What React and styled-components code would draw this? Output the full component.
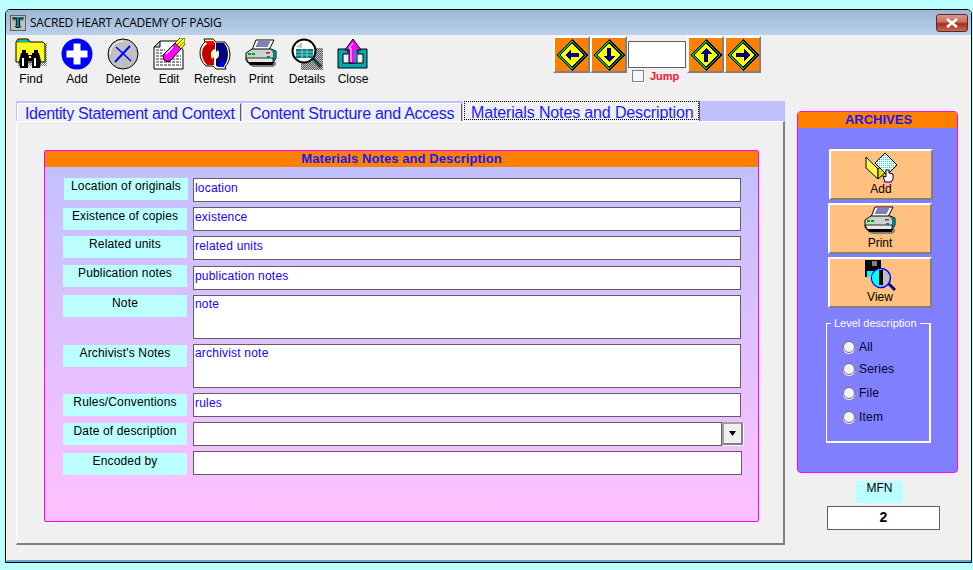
import React from 'react'
import styled, { createGlobalStyle } from 'styled-components'

const GlobalStyle = createGlobalStyle`
  html, body {
    margin: 0;
    padding: 0;
    background: #bbffff;
    font-family: "Liberation Sans", Arial, sans-serif;
    font-size: 12px;
    overflow: hidden;
  }
`

const FindIcon = () => (
  <svg width='32' height='32' viewBox='0 0 32 32'>
    <defs>
      <pattern id='findDots' width='3' height='3' patternUnits='userSpaceOnUse'>
        <rect width='3' height='3' fill='#ffff00' />
        <rect width='1' height='1' fill='#fffff0' />
      </pattern>
      <pattern id='findShade' width='2' height='2' patternUnits='userSpaceOnUse'>
        <rect width='1' height='1' fill='#808080' />
        <rect x='1' y='1' width='1' height='1' fill='#808080' />
      </pattern>
    </defs>
    <rect x='3' y='5' width='30' height='23' fill='url(#findShade)' />
    <path d='M1 4 L3 1 H13 L15 4 H28 L30 6 V24 H1 Z' fill='url(#findDots)' stroke='#000' strokeWidth='1' />
    <path d='M2 4 L4 2 H13 L14 4 Z' fill='#00ffff' stroke='#000' strokeWidth='.5' />
    <path d='M6 15 H13 V30 H5 L4 23 Z M17 15 H24 L26 23 L25 30 H17 Z' fill='#000' />
    <rect x='12' y='17' width='6' height='6' fill='#000' />
    <rect x='7' y='12' width='4' height='4' fill='#000' />
    <rect x='19' y='12' width='4' height='4' fill='#000' />
    <path d='M7 20 H9 V28 H7 Z M19 20 H21 V28 H19 Z M14 18 H16 V20 H14 Z' fill='#fff' />
  </svg>
)

const AddIcon = () => (
  <svg width='32' height='32' viewBox='0 0 32 32'>
    <circle cx='16' cy='16' r='15.5' fill='#0000ff' />
    <path d='M12.5 5.5 H19.5 V12.5 H26.5 V19.5 H19.5 V26.5 H12.5 V19.5 H5.5 V12.5 H12.5 Z' fill='#fff' />
  </svg>
)

const DeleteIcon = () => (
  <svg width='32' height='32' viewBox='0 0 32 32'>
    <circle cx='16' cy='16' r='15' fill='#c0c0c0' stroke='#000' strokeWidth='1' />
    <path d='M3 16 A13 13 0 0 1 16 3' fill='none' stroke='#fff' strokeWidth='1' />
    <path d='M8 24 L23 8' stroke='#0000ff' strokeWidth='2' />
    <path d='M9 9 L24 23' stroke='#0000ff' strokeWidth='1.5' />
  </svg>
)

const EditIcon = () => (
  <svg width='32' height='32' viewBox='0 0 32 32'>
    <path d='M7 3 H24 L30 12 V31 H1 V9 Z' fill='#fff' stroke='#000' />
    <path d='M7 3 V9 H1 Z' fill='#c0c0c0' stroke='#000' />
    <path d='M3 12 H12 M3 15 H9 M3 18 H28 M3 21 H28 M3 24 H28 M3 27 H28' stroke='#707070' strokeWidth='1.5' strokeDasharray='3 1' />
    <path d='M10 17 L22 5 L28 11 L17 23 Q14 25 11 22 Z' fill='#ff00ff' stroke='#000' />
    <path d='M13 16 L20 9' stroke='#fff' strokeWidth='1.5' />
    <path d='M22 5 L27 0 H32 V6 L28 11 Z' fill='#ffff00' stroke='#000' strokeWidth='.7' />
    <path d='M24 7 L30 1 M26 9 L31 4' stroke='#404040' strokeWidth='.8' />
  </svg>
)

const RefreshIcon = () => (
  <svg width='32' height='32' viewBox='0 0 32 32'>
    <path d='M5 1 H14 L17 4 H26 Q31 9 31 16 Q31 24 26 29 L27 31 H17 L14 28 H7 Q1 23 1 15 Q1 8 6 4 Z' fill='#ffffcc' stroke='#000' />
    <path d='M6 3 H14 L16 5 V11 Q12 12 12 16 Q12 19 13 21 L15 19 V27 H8 Q3 22 3 15 Q3 9 8 6 Z' fill='#c00000' />
    <path d='M6 3 H14 L15 7 H9 Z' fill='#ff0000' />
    <path d='M17 5 H25 Q29 10 29 16 Q29 23 25 28 H17 V21 Q20 20 20 16 Q20 13 19 12 L17 14 Z' fill='#000080' />
    <path d='M26 23 L25 29 H18 L21 25 Z' fill='#0000ff' />
  </svg>
)

const PrinterIcon = () => (
  <svg width='32' height='32' viewBox='0 0 32 32'>
    <path d='M4 24 H31 V27 L28 29 H8 L4 27 Z' fill='#808080' />
    <path d='M11 2 H29 L24 12 H7 Z' fill='#fff' stroke='#000' />
    <path d='M13 4 H25 M12 6 H24 M11 8 H23' stroke='#000080' strokeWidth='1' />
    <path d='M7 11 H26 L31 13 V20 L28 25 H3 L1 22 V15 Z' fill='#c8d4d0' stroke='#000' />
    <path d='M26 12 L31 13 V20 L28 23 V15 Z' fill='#008080' />
    <path d='M1 20 H28 V25 H4 Z' fill='#e8e8e8' stroke='#000' strokeWidth='.8' />
    <path d='M4 24 H28 V27 H5 Z' fill='#000' />
    <path d='M3 15 H6 V17 H3 Z M7 15 H10 V17 H7 Z' fill='#00a000' />
    <rect x='21' y='14' width='4' height='1.5' fill='#ff0000' />
    <rect x='22' y='18' width='3' height='2' fill='#008080' />
  </svg>
)

const DetailsIcon = () => (
  <svg width='32' height='32' viewBox='0 0 32 32'>
    <defs>
      <pattern id='detailShade' width='2' height='2' patternUnits='userSpaceOnUse'>
        <rect width='2' height='2' fill='#c0c0c0' />
        <rect width='1' height='1' fill='#606060' />
        <rect x='1' y='1' width='1' height='1' fill='#606060' />
      </pattern>
    </defs>
    <rect x='10' y='10' width='22' height='22' fill='url(#detailShade)' />
    <circle cx='13' cy='13' r='11.5' fill='#fff' stroke='#000' strokeWidth='2' />
    <path d='M5 9 L11 4 V10 Z' fill='#c0c0c0' />
    <rect x='5' y='11' width='17' height='9' fill='#008080' />
    <path d='M5 14 H22 M5 17 H22 M11 11 V20 M16 11 V20' stroke='#a0e0e0' strokeWidth='.8' />
    <path d='M20 21 L23 20 L31 28 L29 30 Z' fill='#000' />
    <path d='M22 22 L30 29' stroke='#00c0c0' strokeWidth='1' />
  </svg>
)

const CloseIcon = () => (
  <svg width='32' height='32' viewBox='0 0 32 32'>
    <path d='M1 11 H11 V16 H6 V25 H26 V16 H21 V11 H30 V30 H1 Z' fill='#00a8b0' stroke='#000' />
    <path d='M12 25 V12 H8 L16 1 L24 12 H20 V25 Z' fill='#ff00ff' stroke='#000' />
    <path d='M14 24 V10 H12 L16 5' fill='none' stroke='#fff' strokeWidth='1' />
    <path d='M18.5 12 V25' stroke='#00a8b0' strokeWidth='2' />
  </svg>
)

const Diamond = ({ dir }) => {
  const rotate = { left: 0, up: 90, right: 180, down: 270 }[dir]
  return (
    <svg width='32' height='32' viewBox='0 0 32 32' shapeRendering='crispEdges'>
      <path d='M16 0 L32 16 L16 32 L0 16 Z' fill='#000' />
      <path d='M16 1.5 L30.5 16 L16 30.5 L1.5 16 Z' fill='#00c000' />
      <path d='M16 3 L29 16 L16 29 L3 16 Z' fill='#000' />
      <path d='M16 4.5 L27.5 16 L16 27.5 L4.5 16 Z' fill='#ffff00' />
      <path d='M9 16 L15 10 V14 H23 V18 H15 V22 Z' fill='#000080' transform={`rotate(${rotate} 16 16)`} />
    </svg>
  )
}

const FolderHandIcon = () => (
  <svg width='32' height='32' viewBox='0 0 32 32'>
    <defs>
      <pattern id='folderDots' width='2' height='2' patternUnits='userSpaceOnUse'>
        <rect width='2' height='2' fill='#ffff00' />
        <rect width='1' height='1' fill='#ffffff' />
      </pattern>
      <pattern id='docDots' width='2' height='2' patternUnits='userSpaceOnUse'>
        <rect width='2' height='2' fill='#ffffff' />
        <rect width='1' height='1' fill='#00e0e0' />
      </pattern>
    </defs>
    <path d='M1 6 L13 18 V28 L1 17 Z' fill='url(#folderDots)' stroke='#000' />
    <path d='M13 18 L20 12 V22 L13 28 Z' fill='#e0e000' stroke='#000' />
    <path d='M10 12 L20 2 L32 14 L22 24 Z' fill='url(#docDots)' stroke='#000' />
    <path d='M21 19 H24 V22 L28 23 V28 L26 31 H20 L18 25 L21 26 Z' fill='#fff' stroke='#000' />
    <path d='M19 31 Q23 33 27 31' fill='none' stroke='#ff00ff' strokeWidth='1' />
  </svg>
)

const ViewIcon = () => (
  <svg width='32' height='32' viewBox='0 0 32 32'>
    <rect x='1' y='1' width='16' height='17' fill='#000' />
    <rect x='3' y='12' width='12' height='6' fill='#00ffff' />
    <rect x='8' y='2' width='5' height='5' fill='#808080' />
    <circle cx='17' cy='19' r='9.5' fill='#c0c0c0' stroke='#0000ff' strokeWidth='1.5' />
    <path d='M17 10 A9 9 0 0 0 17 28 Z' fill='#00ffff' />
    <path d='M15 11 H19 V26 H15 Z' fill='#000' />
    <path d='M24 26 L26 24 L32 30 L30 32 Z' fill='#000080' />
  </svg>
)

const tools = [
  ['Find', FindIcon],
  ['Add', AddIcon],
  ['Delete', DeleteIcon],
  ['Edit', EditIcon],
  ['Refresh', RefreshIcon],
  ['Print', PrinterIcon],
  ['Details', DetailsIcon],
  ['Close', CloseIcon],
]

const tabs = [
  { title: 'Identity Statement and Context', width: 224, spacing: -0.34 },
  { title: 'Content Structure and Access', width: 220, spacing: -0.27 },
  { title: 'Materials Notes and Description', width: 237, spacing: -0.14, active: true },
]

const rows = [
  { label: 'Location of originals', value: 'location', top: 11, shift: 1 },
  { label: 'Existence of copies', value: 'existence', labelTop: 1 },
  { label: 'Related units', value: 'related units' },
  { label: 'Publication notes', value: 'publication notes', top: 6, labelTop: -1 },
  { label: 'Note', value: 'note', tall: true },
  { label: "Archivist's Notes", value: 'archivist note', tall: true, labelTop: 1 },
  { label: 'Rules/Conventions', value: 'rules', labelTop: 1 },
  { label: 'Date of description', value: '', combo: true, labelTop: 1 },
  { label: 'Encoded by', value: '', wide: true, labelTop: 2 },
]

const levels = [
  { name: 'All', top: 0 },
  { name: 'Series', top: 0 },
  { name: 'File', top: 2 },
  { name: 'Item', top: 2 },
]

const App = () => {
  return (
    <Window>
      <GlobalStyle />
      <TitleBar>
        <TitleIcon>T</TitleIcon>
        <TitleText>SACRED HEART ACADEMY OF PASIG</TitleText>
        <CloseButton type='button'>
          <svg width='14' height='10' viewBox='0 0 14 10'>
            <path d='M2 1 L12 9 M12 1 L2 9' stroke='#fff' strokeWidth='2.6' />
          </svg>
        </CloseButton>
      </TitleBar>
      <Content>
        <Toolbar>
          <Tools>
            {tools.map(([name, Icon]) => (
              <Tool key={name}>
                <Icon />
                <ToolLabel>{name}</ToolLabel>
              </Tool>
            ))}
          </Tools>
          <Nav>
            <NavButton type='button'><Diamond dir='left' /></NavButton>
            <NavButton type='button'><Diamond dir='down' /></NavButton>
            <JumpBox>
              <JumpInput readOnly value='' />
              <JumpRow>
                <JumpCheck />
                <JumpLabel>Jump</JumpLabel>
              </JumpRow>
            </JumpBox>
            <NavButton type='button'><Diamond dir='up' /></NavButton>
            <NavButton type='button'><Diamond dir='right' /></NavButton>
          </Nav>
        </Toolbar>
        <Main>
          <TabArea>
            <TabStrip>
              {tabs.map((tab) => (
                <Tab key={tab.title} $active={tab.active} $width={tab.width} $spacing={tab.spacing}>
                  {tab.active ? <FocusText>{tab.title}</FocusText> : tab.title}
                </Tab>
              ))}
            </TabStrip>
            <TabPage>
              <Panel>
                <PanelHeader>Materials Notes and Description</PanelHeader>
                {rows.map((row) => (
                  <Row key={row.label} $top={row.top}>
                    <FieldLabel $shift={row.shift} $top={row.labelTop}>{row.label}</FieldLabel>
                    {row.tall ? (
                      <TallField readOnly value={row.value} />
                    ) : row.combo ? (
                      <Combo>
                        <ComboField readOnly value={row.value} />
                        <ComboButton type='button'>
                          <svg width='9' height='5' viewBox='0 0 9 5'>
                            <path d='M1 0 H8 L4.5 5 Z' fill='#000' />
                          </svg>
                        </ComboButton>
                      </Combo>
                    ) : (
                      <Field readOnly value={row.value} $wide={row.wide} />
                    )}
                  </Row>
                ))}
              </Panel>
            </TabPage>
          </TabArea>
          <Side>
            <Archives>
              <ArchivesHeader>ARCHIVES</ArchivesHeader>
              <ArchiveButton type='button' $shift={1}>
                <FolderHandIcon />
                <span>Add</span>
              </ArchiveButton>
              <ArchiveButton type='button'>
                <PrinterIcon />
                <span>Print</span>
              </ArchiveButton>
              <ArchiveButton type='button'>
                <ViewIcon />
                <span>View</span>
              </ArchiveButton>
              <LevelGroup>
                <LevelLegend>Level description</LevelLegend>
                {levels.map((level) => (
                  <LevelRow key={level.name} $top={level.top}>
                    <Radio />
                    {level.name}
                  </LevelRow>
                ))}
              </LevelGroup>
            </Archives>
            <MfnLabel>MFN</MfnLabel>
            <MfnValue>2</MfnValue>
          </Side>
        </Main>
      </Content>
    </Window>
  )
}

export default App

const Window = styled.div`
  box-sizing: border-box;
  width: 967px;
  height: 554px;
  margin: 9px 0 0 5px;
  border: 1px solid #000;
  border-radius: 5px 5px 0 0;
  overflow: hidden;
  background: #f0f0f0;
  display: flex;
  flex-direction: column;
`
const TitleBar = styled.div`
  flex: 0 0 25px;
  display: flex;
  align-items: center;
  padding: 0 3px 0 4px;
  background: linear-gradient(#9cb6d4, #b9d1ea);
`
const TitleIcon = styled.span`
  box-sizing: border-box;
  width: 16px;
  height: 16px;
  background: #c0c0c0;
  border: 1px solid #606060;
  color: #008c96;
  font: bold 14px/14px "Liberation Serif", serif;
  text-align: center;
  text-shadow: 1px 0 #000, -1px 0 #000, 0 1px #000;
`
const TitleText = styled.span`
  margin-left: 4px;
  font: 12px "Open Sans", "Noto Sans", sans-serif;
  letter-spacing: -0.25px;
  color: #000;
`
const CloseButton = styled.button`
  margin-left: auto;
  box-sizing: border-box;
  width: 32px;
  height: 18px;
  padding: 0;
  border: 1px solid #5a2a2a;
  border-radius: 3px;
  background: linear-gradient(#d89a8e 0%, #c9695a 45%, #a82c1c 55%, #c46a58 100%);
  display: flex;
  align-items: center;
  justify-content: center;
`
const Content = styled.div`
  flex: 1;
  min-height: 0;
  background: #f0f0f0;
  border-left: 1px solid #fff;
  border-bottom: 2px solid #62a6d6;
  display: flex;
  flex-direction: column;
`
const Toolbar = styled.div`
  flex: 0 0 66px;
  display: flex;
  align-items: flex-start;
`
const Tools = styled.div`
  display: flex;
  margin: 3px 0 0 1px;
`
const Tool = styled.div`
  width: 46px;
  display: flex;
  flex-direction: column;
  align-items: center;
`
const ToolLabel = styled.span`
  margin-top: 2px;
  line-height: 14px;
  color: #000;
`
const Nav = styled.div`
  display: flex;
  margin: 1px 0 0 177px;
`
const NavButton = styled.button`
  box-sizing: border-box;
  width: 37px;
  height: 37px;
  padding: 0;
  background: #ff8000;
  border: 2px solid;
  border-color: #fff #808080 #808080 #fff;
  display: flex;
  align-items: center;
  justify-content: center;
`
const JumpBox = styled.div`
  width: 59px;
  margin-left: 1px;
  display: flex;
  flex-direction: column;
  padding-top: 5px;
`
const JumpInput = styled.input`
  box-sizing: border-box;
  width: 58px;
  height: 27px;
  padding: 0;
  border: 1px solid #606060;
  background: #fff;
  outline: none;
`
const JumpRow = styled.div`
  display: flex;
  align-items: center;
  margin: 2px 0 0 4px;
`
const JumpCheck = styled.span`
  box-sizing: border-box;
  width: 12px;
  height: 12px;
  background: #f8f8f8;
  border: 1px solid #808080;
  box-shadow: 1px 1px 0 #fff;
`
const JumpLabel = styled.span`
  margin-left: 6px;
  font-size: 11px;
  font-weight: bold;
  color: #ff1030;
`
const Main = styled.div`
  flex: 1;
  display: flex;
  align-items: flex-start;
`
const TabArea = styled.div`
  flex: 0 0 769px;
  margin-left: 9px;
`
const TabStrip = styled.div`
  height: 20px;
  display: flex;
  align-items: flex-end;
  gap: 1px;
  padding-left: 1px;
  background: #c0c0ff;
`
const Tab = styled.div`
  box-sizing: border-box;
  width: ${(p) => p.$width}px;
  height: ${(p) => (p.$active ? 20 : 18)}px;
  padding-left: ${(p) => (p.$active ? 0 : 7)}px;
  background: #f0f0f0;
  border-top: ${(p) => (p.$active ? 0 : 1)}px solid #fff;
  border-left: 1px solid #fff;
  border-right: 1px solid #606060;
  font-size: 16px;
  letter-spacing: ${(p) => p.$spacing}px;
  line-height: 19px;
  color: #1a1aff;
  white-space: nowrap;
  overflow: hidden;
`
const FocusText = styled.span`
  display: block;
  box-sizing: border-box;
  height: 19px;
  padding-left: 7px;
  line-height: 23px;
  overflow: hidden;
  outline: 1px dotted #000;
  outline-offset: -1px;
`
const TabPage = styled.div`
  box-sizing: border-box;
  height: 424px;
  padding: 28px 0 0 27px;
  background: #f0f0f0;
  border-style: solid;
  border-width: 1px 2px 2px 1px;
  border-color: #fff #808080 #808080 #fff;
`
const Panel = styled.div`
  box-sizing: border-box;
  width: 715px;
  height: 372px;
  padding-left: 18px;
  border: 1px solid #ff00ff;
  border-radius: 2px;
  background: linear-gradient(#c0c0ff, #ffc0ff);
`
const PanelHeader = styled.div`
  height: 16px;
  margin-left: -18px;
  background: #ff8000;
  color: #1a1af0;
  font-weight: bold;
  font-size: 13px;
  letter-spacing: 0.08px;
  line-height: 16px;
  text-align: center;
`
const Row = styled.div`
  display: grid;
  grid-template-columns: 130px 1fr;
  margin-top: ${(p) => p.$top ?? 5}px;
`
const FieldLabel = styled.div`
  width: 124px;
  height: 22px;
  margin-left: ${(p) => p.$shift ?? 0}px;
  margin-top: ${(p) => p.$top ?? 0}px;
  background: #bbffff;
  color: #000;
  line-height: 16px;
  letter-spacing: 0.15px;
  text-align: center;
`
const Field = styled.input`
  box-sizing: border-box;
  width: ${(p) => (p.$wide ? 549 : 548)}px;
  height: 24px;
  padding: 0 0 4px 1px;
  border: 1px solid #606060;
  background: #fff;
  color: #1a00ff;
  font: 12px "Liberation Sans", Arial, sans-serif;
  letter-spacing: 0.2px;
  outline: none;
`
const TallField = styled.textarea`
  display: block;
  box-sizing: border-box;
  width: 548px;
  height: 44px;
  padding: 1px 0 0 1px;
  border: 1px solid #606060;
  background: #fff;
  color: #1a00ff;
  font: 12px/14px "Liberation Sans", Arial, sans-serif;
  letter-spacing: 0.2px;
  resize: none;
  outline: none;
`
const Combo = styled.div`
  display: flex;
`
const ComboField = styled(Field)`
  width: 529px;
`
const ComboButton = styled.button`
  box-sizing: border-box;
  width: 21px;
  height: 23px;
  padding: 0;
  background: #f0f0f0;
  border: 2px solid #808080;
  border-left-color: #a0a0a0;
  border-top-color: #a0a0a0;
  box-shadow: 1px 1px 0 #fff;
  display: flex;
  align-items: center;
  justify-content: center;
`
const Side = styled.div`
  flex: 0 0 161px;
  margin: 10px 0 0 12px;
  display: flex;
  flex-direction: column;
`
const Archives = styled.div`
  box-sizing: border-box;
  width: 161px;
  height: 362px;
  border: 1px solid #ff00ff;
  border-radius: 4px;
  background: #8080ff;
  display: flex;
  flex-direction: column;
  align-items: flex-start;
`
const ArchivesHeader = styled.div`
  align-self: stretch;
  height: 16px;
  margin-bottom: 21px;
  padding-left: 2px;
  background: #ff8000;
  color: #1a1af0;
  font-weight: bold;
  font-size: 13px;
  line-height: 15px;
  text-align: center;
`
const ArchiveButton = styled.button`
  box-sizing: border-box;
  width: 104px;
  height: 51px;
  margin: 0 0 3px ${(p) => 30 + (p.$shift ?? 0)}px;
  padding: 0;
  background: #ffc080;
  border: 2px solid;
  border-color: #fff #808080 #808080 #fff;
  color: #000;
  font: 12px/13px "Liberation Sans", Arial, sans-serif;
  display: flex;
  flex-direction: column;
  align-items: center;
`
const LevelGroup = styled.fieldset`
  box-sizing: border-box;
  width: 105px;
  min-width: 0;
  height: 127px;
  margin: 5px 0 0 28px;
  padding: 6px 0 0;
  border: 1px solid #fff;
  border-width: 1px 2px 2px 1px;
`
const LevelLegend = styled.legend`
  padding: 0 3px;
  margin-left: 4px;
  color: #fff;
  font-size: 11px;
  line-height: 14px;
  white-space: nowrap;
`
const LevelRow = styled.div`
  display: flex;
  align-items: center;
  height: 22px;
  margin: ${(p) => p.$top}px 0 0 16px;
  gap: 4px;
  color: #000030;
  letter-spacing: 0.2px;
`
const Radio = styled.span`
  box-sizing: border-box;
  width: 12px;
  height: 12px;
  border-radius: 50%;
  background: #f4f4f4;
  border: 1px solid #707070;
  box-shadow: 0 1px 0 #fff;
`
const MfnLabel = styled.div`
  width: 47px;
  height: 22px;
  margin: 8px 0 0 59px;
  background: #bbffff;
  color: #000;
  line-height: 15px;
  text-align: center;
`
const MfnValue = styled.div`
  box-sizing: border-box;
  width: 113px;
  height: 24px;
  margin: 3px 0 0 30px;
  border: 1px solid #606060;
  background: #fff;
  color: #000;
  font-size: 14px;
  font-weight: bold;
  line-height: 21px;
  text-align: center;
`
